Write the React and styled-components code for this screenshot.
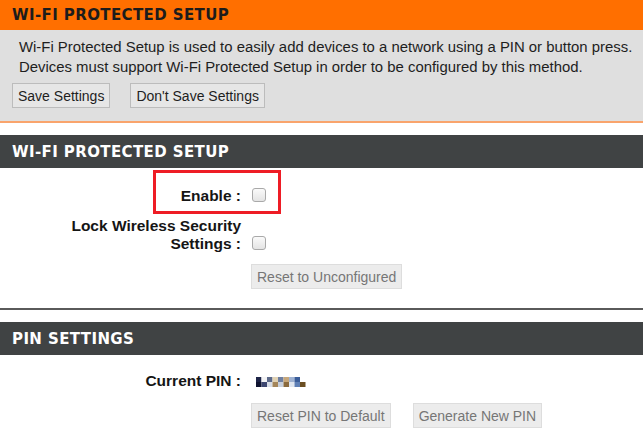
import React from 'react';
import styled, { createGlobalStyle } from 'styled-components';

const GlobalStyle = createGlobalStyle`
  html, body {
    margin: 0;
    padding: 0;
    background: #ffffff;
  }
  body {
    font-family: "Liberation Sans", Arial, sans-serif;
    color: #1a1a1a;
  }
`;

const Page = styled.div`
  width: 643px;
  height: 444px;
  overflow: hidden;
  position: relative;
`;

const Banner = styled.div`
  height: 30px;
  display: flex;
  align-items: center;
  padding-left: 12px;
  background: ${(p) => (p.$orange ? '#ff6f00' : '#404344')};
  color: ${(p) => (p.$orange ? '#1c1c1c' : '#ffffff')};
  font-family: "DejaVu Sans", Verdana, sans-serif;
  font-weight: bold;
  font-size: 15px;
  letter-spacing: 0.4px;
`;

const SectionBar = styled(Banner)`
  height: 33px;
  margin-top: ${(p) => p.$top}px;
`;

const Intro = styled.div`
  background: #dfdfdf;
  border-bottom: 2px solid #f9a46c;
  padding: 7px 0 13px 19px;
  height: 71px;
`;

const Para = styled.p`
  margin: 0;
  font-size: 14.9px;
  line-height: 20px;
  color: #1e1e1e;
`;

const ButtonRow = styled.div`
  display: flex;
  gap: ${(p) => p.$gap || 20}px;
  margin-top: ${(p) => p.$top || 0}px;
  margin-left: ${(p) => p.$left || 0}px;
`;

const Button = styled.button`
  height: 25px;
  padding: 0 5px;
  font-family: "Liberation Sans", Arial, sans-serif;
  font-size: 14px;
  background: ${(p) => (p.disabled ? '#ececec' : '#e6e6e6')};
  border: 1px solid ${(p) => (p.disabled ? '#dddddd' : '#bcbcbc')};
  color: ${(p) => (p.disabled ? '#767676' : '#1e1e1e')};
  border-radius: 0;
`;

const Form = styled.div`
  padding-top: ${(p) => p.$top}px;
`;

const Row = styled.div`
  display: flex;
  align-items: flex-end;
  margin-top: ${(p) => p.$top || 0}px;
`;

const Label = styled.div`
  width: 241px;
  text-align: right;
  font-weight: bold;
  font-size: 15.5px;
  line-height: 18px;
  color: #151515;
`;

const Check = styled.span`
  width: 12px;
  height: 12px;
  margin-left: 11px;
  margin-bottom: 3px;
  border: 1px solid #a9a9a9;
  border-radius: 3px;
  background: linear-gradient(#fafafa, #e4e4e4);
`;

const Divider = styled.hr`
  margin: 19px 0 0;
  border: 0;
  border-top: 2px solid #5a5a5a;
`;

const Highlight = styled.div`
  position: absolute;
  left: 153px;
  top: 170px;
  width: 122px;
  height: 38px;
  border: 3px solid #ee1c25;
`;

const PinValue = styled.svg`
  margin-left: 15px;
  margin-bottom: 3px;
`;

const pinBlocks = [
  ['#1d2447', '#f2f2f4', '#5d6a8a', '#e1d2b4', '#6f7fa0', '#c7a77a', '#9fb2d2', '#3a5d99', '#ffffff'],
  ['#0f1430', '#3c4670', '#d8dde6', '#a4865a', '#c7cfdc', '#8a6a3e', '#dfe6f0', '#5e7fb5', '#6b4e22'],
];

const App = () => {
  return (
    <Page>
      <GlobalStyle />
      <Banner $orange>WI-FI PROTECTED SETUP</Banner>
      <Intro>
        <Para>Wi-Fi Protected Setup is used to easily add devices to a network using a PIN or button press.</Para>
        <Para>Devices must support Wi-Fi Protected Setup in order to be configured by this method.</Para>
        <ButtonRow $top={6} $left={-7}>
          <Button>Save Settings</Button>
          <Button>Don't Save Settings</Button>
        </ButtonRow>
      </Intro>

      <SectionBar $top={12}>WI-FI PROTECTED SETUP</SectionBar>
      <Form $top={19}>
        <Row>
          <Label>Enable :</Label>
          <Check />
        </Row>
        <Row $top={12}>
          <Label>Lock Wireless Security<br />Settings :</Label>
          <Check />
        </Row>
        <ButtonRow $top={11} $left={251}>
          <Button disabled>Reset to Unconfigured</Button>
        </ButtonRow>
      </Form>
      <Divider />

      <SectionBar $top={12}>PIN SETTINGS</SectionBar>
      <Form $top={17}>
        <Row>
          <Label>Current PIN :</Label>
          <PinValue width="50" height="10" viewBox="0 0 50 10">
            {pinBlocks.map((line, r) =>
              line.map((c, i) => (
                <rect key={`${r}-${i}`} x={i * 5.5} y={r * 5} width="5.5" height="5" fill={c} />
              ))
            )}
          </PinValue>
        </Row>
        <ButtonRow $top={13} $left={251} $gap={22}>
          <Button disabled>Reset PIN to Default</Button>
          <Button disabled>Generate New PIN</Button>
        </ButtonRow>
      </Form>

      <Highlight />
    </Page>
  );
};

export default App;
